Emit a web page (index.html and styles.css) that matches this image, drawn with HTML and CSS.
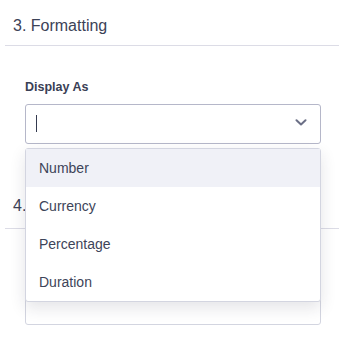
FILE: index.html
```html
<!DOCTYPE html>
<html lang="en">
<head>
    <meta charset="UTF-8">
    <meta name="viewport" content="width=device-width, initial-scale=1.0">
    <title>Formatting</title>
    <link rel="stylesheet" href="styles.css">
</head>
<body>
    <div class="section">
        <div class="section-head">3. Formatting</div>
        <div class="section-body">
            <label class="field-label">Display As</label>
            <div class="select-wrap">
                <div class="select-box">
                    <span class="caret"></span>
                    <svg class="chevron" width="12" height="7" viewBox="0 0 12 7">
                        <path d="M1.5 1.2 L6 5.4 L10.5 1.2" fill="none" stroke="#6b6f86" stroke-width="2" stroke-linecap="round" stroke-linejoin="round"/>
                    </svg>
                </div>
                <ul class="dropdown">
                    <li class="option active">Number</li>
                    <li class="option">Currency</li>
                    <li class="option">Percentage</li>
                    <li class="option">Duration</li>
                </ul>
            </div>
        </div>
    </div>

    <div class="section section-next">
        <div class="section-head">4.</div>
        <div class="section-body">
            <div class="field-label empty"></div>
            <div class="select-box plain"></div>
        </div>
    </div>
</body>
</html>
```

FILE: styles.css
```css
* {
    margin: 0;
    padding: 0;
    box-sizing: border-box;
}

body {
    font-family: "Liberation Sans", Arial, sans-serif;
    background: #ffffff;
    color: #3c4257;
}

.section {
    margin-left: 5px;
}

.section-head {
    padding: 14px 0 7px 8px;
    font-size: 16px;
    line-height: 24px;
    color: #3c4257;
    border-bottom: 1px solid #dcdce6;
}

.section-next {
    margin-top: 36px;
}

.section-next .section-head {
    padding-bottom: 10px;
}

.section-body {
    padding: 33px 18px 0 20px;
}

.section-next .section-body {
    padding-top: 31px;
}

.field-label {
    display: block;
    font-size: 12.5px;
    line-height: 16px;
    font-weight: 700;
    color: #3a4055;
    margin-bottom: 9px;
}

.field-label.empty {
    height: 16px;
}

.select-wrap {
    position: relative;
}

.select-box {
    height: 40px;
    border: 1px solid #b5b7c9;
    border-radius: 3px;
    display: flex;
    align-items: center;
    justify-content: space-between;
    padding: 0 13px 0 10px;
}

.select-box.plain {
    border-color: #d3d5e0;
}

.caret {
    width: 1px;
    height: 17px;
    background: #343a4f;
    margin-top: -1px;
}

.chevron {
    margin-top: -3px;
}

.dropdown {
    list-style: none;
    position: absolute;
    top: 44px;
    left: 0;
    right: 0;
    background: #ffffff;
    border: 1px solid #d3d5e0;
    border-radius: 3px;
    box-shadow: 0 6px 16px rgba(30, 35, 60, 0.12);
    z-index: 10;
}

.option {
    height: 38px;
    line-height: 38px;
    padding-left: 13px;
    font-size: 14px;
    color: #3d4459;
}

.option.active {
    background: #f0f1f7;
}
```
